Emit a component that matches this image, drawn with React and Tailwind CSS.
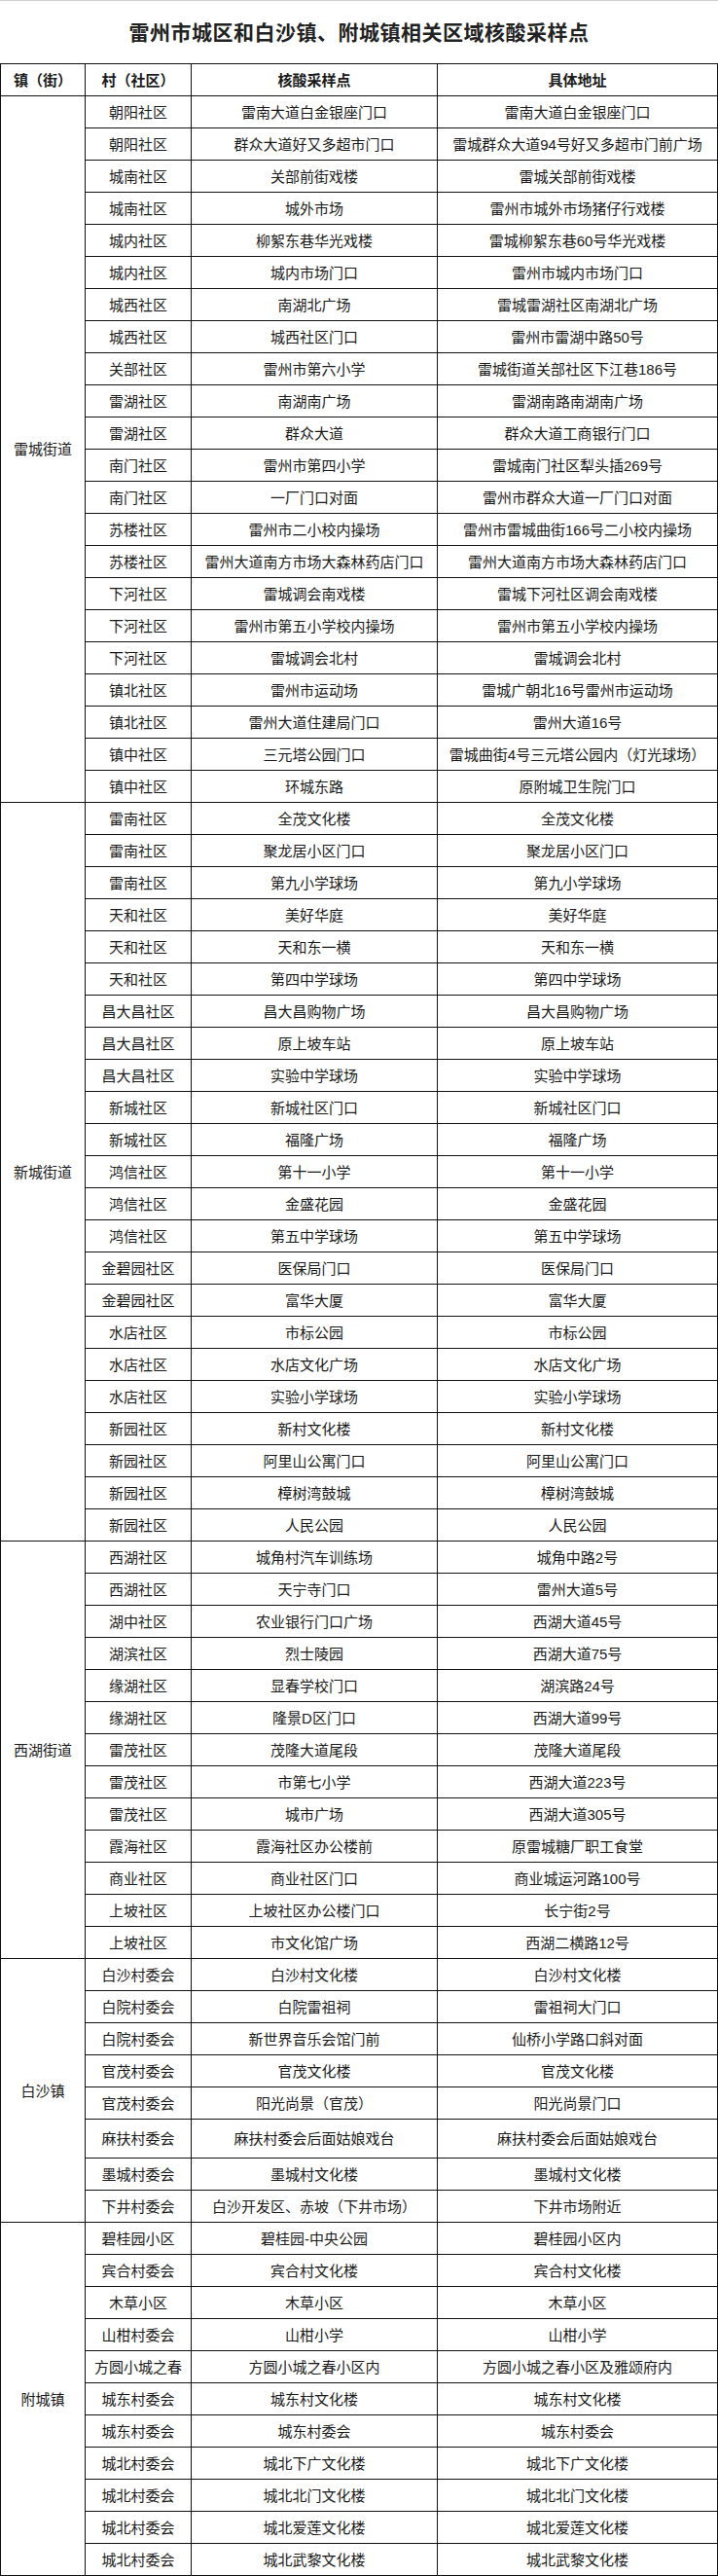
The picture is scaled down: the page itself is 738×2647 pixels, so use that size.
import React from "react";

const groups = [
  {
    town: "雷城街道",
    rows: [
      ["朝阳社区", "雷南大道白金银座门口", "雷南大道白金银座门口"],
      ["朝阳社区", "群众大道好又多超市门口", "雷城群众大道94号好又多超市门前广场"],
      ["城南社区", "关部前街戏楼", "雷城关部前街戏楼"],
      ["城南社区", "城外市场", "雷州市城外市场猪仔行戏楼"],
      ["城内社区", "柳絮东巷华光戏楼", "雷城柳絮东巷60号华光戏楼"],
      ["城内社区", "城内市场门口", "雷州市城内市场门口"],
      ["城西社区", "南湖北广场", "雷城雷湖社区南湖北广场"],
      ["城西社区", "城西社区门口", "雷州市雷湖中路50号"],
      ["关部社区", "雷州市第六小学", "雷城街道关部社区下江巷186号"],
      ["雷湖社区", "南湖南广场", "雷湖南路南湖南广场"],
      ["雷湖社区", "群众大道", "群众大道工商银行门口"],
      ["南门社区", "雷州市第四小学", "雷城南门社区犁头插269号"],
      ["南门社区", "一厂门口对面", "雷州市群众大道一厂门口对面"],
      ["苏楼社区", "雷州市二小校内操场", "雷州市雷城曲街166号二小校内操场"],
      ["苏楼社区", "雷州大道南方市场大森林药店门口", "雷州大道南方市场大森林药店门口"],
      ["下河社区", "雷城调会南戏楼", "雷城下河社区调会南戏楼"],
      ["下河社区", "雷州市第五小学校内操场", "雷州市第五小学校内操场"],
      ["下河社区", "雷城调会北村", "雷城调会北村"],
      ["镇北社区", "雷州市运动场", "雷城广朝北16号雷州市运动场"],
      ["镇北社区", "雷州大道住建局门口", "雷州大道16号"],
      ["镇中社区", "三元塔公园门口", "雷城曲街4号三元塔公园内（灯光球场）"],
      ["镇中社区", "环城东路", "原附城卫生院门口"],
    ],
  },
  {
    town: "新城街道",
    rows: [
      ["雷南社区", "全茂文化楼", "全茂文化楼"],
      ["雷南社区", "聚龙居小区门口", "聚龙居小区门口"],
      ["雷南社区", "第九小学球场", "第九小学球场"],
      ["天和社区", "美好华庭", "美好华庭"],
      ["天和社区", "天和东一横", "天和东一横"],
      ["天和社区", "第四中学球场", "第四中学球场"],
      ["昌大昌社区", "昌大昌购物广场", "昌大昌购物广场"],
      ["昌大昌社区", "原上坡车站", "原上坡车站"],
      ["昌大昌社区", "实验中学球场", "实验中学球场"],
      ["新城社区", "新城社区门口", "新城社区门口"],
      ["新城社区", "福隆广场", "福隆广场"],
      ["鸿信社区", "第十一小学", "第十一小学"],
      ["鸿信社区", "金盛花园", "金盛花园"],
      ["鸿信社区", "第五中学球场", "第五中学球场"],
      ["金碧园社区", "医保局门口", "医保局门口"],
      ["金碧园社区", "富华大厦", "富华大厦"],
      ["水店社区", "市标公园", "市标公园"],
      ["水店社区", "水店文化广场", "水店文化广场"],
      ["水店社区", "实验小学球场", "实验小学球场"],
      ["新园社区", "新村文化楼", "新村文化楼"],
      ["新园社区", "阿里山公寓门口", "阿里山公寓门口"],
      ["新园社区", "樟树湾鼓城", "樟树湾鼓城"],
      ["新园社区", "人民公园", "人民公园"],
    ],
  },
  {
    town: "西湖街道",
    rows: [
      ["西湖社区", "城角村汽车训练场", "城角中路2号"],
      ["西湖社区", "天宁寺门口", "雷州大道5号"],
      ["湖中社区", "农业银行门口广场", "西湖大道45号"],
      ["湖滨社区", "烈士陵园", "西湖大道75号"],
      ["缘湖社区", "显春学校门口", "湖滨路24号"],
      ["缘湖社区", "隆景D区门口", "西湖大道99号"],
      ["雷茂社区", "茂隆大道尾段", "茂隆大道尾段"],
      ["雷茂社区", "市第七小学", "西湖大道223号"],
      ["雷茂社区", "城市广场", "西湖大道305号"],
      ["霞海社区", "霞海社区办公楼前", "原雷城糖厂职工食堂"],
      ["商业社区", "商业社区门口", "商业城运河路100号"],
      ["上坡社区", "上坡社区办公楼门口", "长宁街2号"],
      ["上坡社区", "市文化馆广场", "西湖二横路12号"],
    ],
  },
  {
    town: "白沙镇",
    rows: [
      ["白沙村委会", "白沙村文化楼", "白沙村文化楼"],
      ["白院村委会", "白院雷祖祠", "雷祖祠大门口"],
      ["白院村委会", "新世界音乐会馆门前", "仙桥小学路口斜对面"],
      ["官茂村委会", "官茂文化楼", "官茂文化楼"],
      ["官茂村委会", "阳光尚景（官茂）", "阳光尚景门口"],
      ["麻扶村委会", "麻扶村委会后面姑娘戏台", "麻扶村委会后面姑娘戏台", true],
      ["墨城村委会", "墨城村文化楼", "墨城村文化楼"],
      ["下井村委会", "白沙开发区、赤坡（下井市场）", "下井市场附近"],
    ],
  },
  {
    town: "附城镇",
    rows: [
      ["碧桂园小区", "碧桂园-中央公园", "碧桂园小区内"],
      ["宾合村委会", "宾合村文化楼", "宾合村文化楼"],
      ["木草小区", "木草小区", "木草小区"],
      ["山柑村委会", "山柑小学", "山柑小学"],
      ["方圆小城之春", "方圆小城之春小区内", "方圆小城之春小区及雅颂府内"],
      ["城东村委会", "城东村文化楼", "城东村文化楼"],
      ["城东村委会", "城东村委会", "城东村委会"],
      ["城北村委会", "城北下广文化楼", "城北下广文化楼"],
      ["城北村委会", "城北北门文化楼", "城北北门文化楼"],
      ["城北村委会", "城北爱莲文化楼", "城北爱莲文化楼"],
      ["城北村委会", "城北武黎文化楼", "城北武黎文化楼"],
    ],
  },
];

const cell = "border border-[#111] px-1 text-center align-middle whitespace-nowrap";

export default function App() {
  return (
    <div className="w-[738px] bg-white text-[#1a1a1a] font-['Liberation_Sans','Noto_Sans_CJK_SC',sans-serif]">
      {/* Title */}
      <div className="h-[65px] border-t border-[#cfcfcf] flex items-center justify-center">
        <h1 className="text-[21px] font-bold tracking-[0.5px] text-[#222] font-['Noto_Sans_CJK_SC',sans-serif]">
          雷州市城区和白沙镇、附城镇相关区域核酸采样点
        </h1>
      </div>

      <table className="w-[737px] border-collapse table-fixed text-[15px] leading-none">
        <colgroup>
          <col className="w-[87px]" />
          <col className="w-[109px]" />
          <col className="w-[253px]" />
          <col className="w-[288px]" />
        </colgroup>
        <thead>
          <tr className="h-[33px] font-bold">
            <th className={cell}>镇（街）</th>
            <th className={cell}>村（社区）</th>
            <th className={cell}>核酸采样点</th>
            <th className={cell}>具体地址</th>
          </tr>
        </thead>
        <tbody>
          {groups.map((g) =>
            g.rows.map((r, i) => (
              <tr key={g.town + i} className={r[3] ? "h-[40px]" : "h-[33px]"}>
                {i === 0 && (
                  <td rowSpan={g.rows.length} className={cell}>
                    {g.town}
                  </td>
                )}
                <td className={cell}>{r[0]}</td>
                <td className={cell}>{r[1]}</td>
                <td className={cell}>{r[2]}</td>
              </tr>
            ))
          )}
        </tbody>
      </table>
    </div>
  );
}
